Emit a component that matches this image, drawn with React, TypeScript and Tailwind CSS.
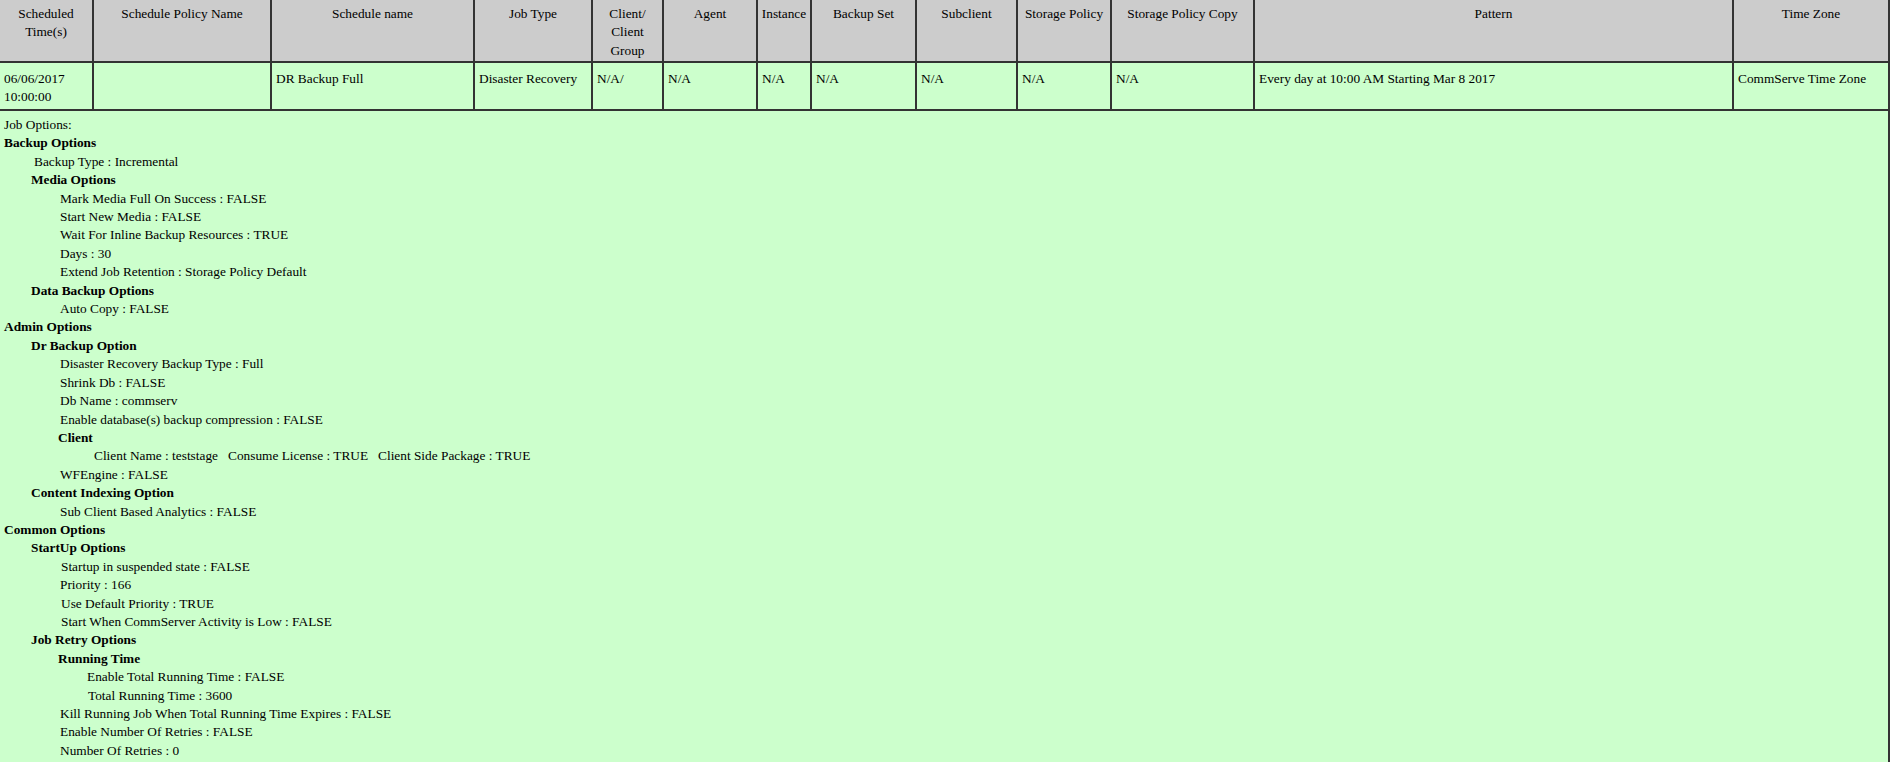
import React from 'react';

type Line = { pad: string; text: string; bold?: boolean };

const headers: React.ReactNode[] = [
  <>Scheduled<br />Time(s)</>,
  'Schedule Policy Name',
  'Schedule name',
  'Job Type',
  <>Client/<br />Client<br />Group</>,
  'Agent',
  'Instance',
  'Backup Set',
  'Subclient',
  'Storage Policy',
  'Storage Policy Copy',
  'Pattern',
  'Time Zone',
];

const row: React.ReactNode[] = [
  <>06/06/2017<br />10:00:00</>,
  '',
  'DR Backup Full',
  'Disaster Recovery',
  'N/A/',
  'N/A',
  'N/A',
  'N/A',
  'N/A',
  'N/A',
  'N/A',
  'Every day at 10:00 AM Starting Mar 8 2017',
  'CommServe Time Zone',
];

const gap = '\u00a0\u00a0\u00a0';

const lines: Line[] = [
  { pad: 'pl-[4px]', text: 'Job Options:' },
  { pad: 'pl-[4px]', text: 'Backup Options', bold: true },
  { pad: 'pl-[34px]', text: 'Backup Type : Incremental' },
  { pad: 'pl-[31px]', text: 'Media Options', bold: true },
  { pad: 'pl-[60px]', text: 'Mark Media Full On Success : FALSE' },
  { pad: 'pl-[60px]', text: 'Start New Media : FALSE' },
  { pad: 'pl-[60px]', text: 'Wait For Inline Backup Resources : TRUE' },
  { pad: 'pl-[60px]', text: 'Days : 30' },
  { pad: 'pl-[60px]', text: 'Extend Job Retention : Storage Policy Default' },
  { pad: 'pl-[31px]', text: 'Data Backup Options', bold: true },
  { pad: 'pl-[60px]', text: 'Auto Copy : FALSE' },
  { pad: 'pl-[4px]', text: 'Admin Options', bold: true },
  { pad: 'pl-[31px]', text: 'Dr Backup Option', bold: true },
  { pad: 'pl-[60px]', text: 'Disaster Recovery Backup Type : Full' },
  { pad: 'pl-[60px]', text: 'Shrink Db : FALSE' },
  { pad: 'pl-[60px]', text: 'Db Name : commserv' },
  { pad: 'pl-[60px]', text: 'Enable database(s) backup compression : FALSE' },
  { pad: 'pl-[58px]', text: 'Client', bold: true },
  {
    pad: 'pl-[94px]',
    text: `Client Name : teststage${gap}Consume License : TRUE${gap}Client Side Package : TRUE`,
  },
  { pad: 'pl-[60px]', text: 'WFEngine : FALSE' },
  { pad: 'pl-[31px]', text: 'Content Indexing Option', bold: true },
  { pad: 'pl-[60px]', text: 'Sub Client Based Analytics : FALSE' },
  { pad: 'pl-[4px]', text: 'Common Options', bold: true },
  { pad: 'pl-[31px]', text: 'StartUp Options', bold: true },
  { pad: 'pl-[61px]', text: 'Startup in suspended state : FALSE' },
  { pad: 'pl-[60px]', text: 'Priority : 166' },
  { pad: 'pl-[61px]', text: 'Use Default Priority : TRUE' },
  { pad: 'pl-[61px]', text: 'Start When CommServer Activity is Low : FALSE' },
  { pad: 'pl-[31px]', text: 'Job Retry Options', bold: true },
  { pad: 'pl-[58px]', text: 'Running Time', bold: true },
  { pad: 'pl-[87px]', text: 'Enable Total Running Time : FALSE' },
  { pad: 'pl-[88px]', text: 'Total Running Time : 3600' },
  { pad: 'pl-[60px]', text: 'Kill Running Job When Total Running Time Expires : FALSE' },
  { pad: 'pl-[60px]', text: 'Enable Number Of Retries : FALSE' },
  { pad: 'pl-[60px]', text: 'Number Of Retries : 0' },
];

export default function App() {
  return (
    <div className="min-h-[762px] bg-white font-['Liberation_Serif',serif] text-[13.33px] leading-[18.4px] text-black">
      <div className="grid w-[1890px] grid-cols-[94px_178px_203px_118px_71px_94px_54px_105px_101px_94px_143px_479px_156px]">
        {headers.map((h, i) => (
          <div
            key={`h${i}`}
            className="h-[63px] border-r-2 border-b-2 border-[#333333] bg-[#cccccc] px-[3px] pt-[5px] text-center"
          >
            {h}
          </div>
        ))}
        {row.map((c, i) => (
          <div
            key={`r${i}`}
            className="h-[48px] border-r-2 border-b-2 border-[#333333] bg-[#ccffcc] pl-[4px] pr-[2px] pt-[7px]"
          >
            {c}
          </div>
        ))}
        <div className="col-span-full min-h-[651px] border-r-2 border-[#333333] bg-[#ccffcc] pt-[5px] pb-[4px]">
          {lines.map((l, i) => (
            <div key={i} className={`${l.pad} whitespace-pre ${l.bold ? 'font-bold' : ''}`}>
              {l.text}
            </div>
          ))}
        </div>
      </div>
    </div>
  );
}
